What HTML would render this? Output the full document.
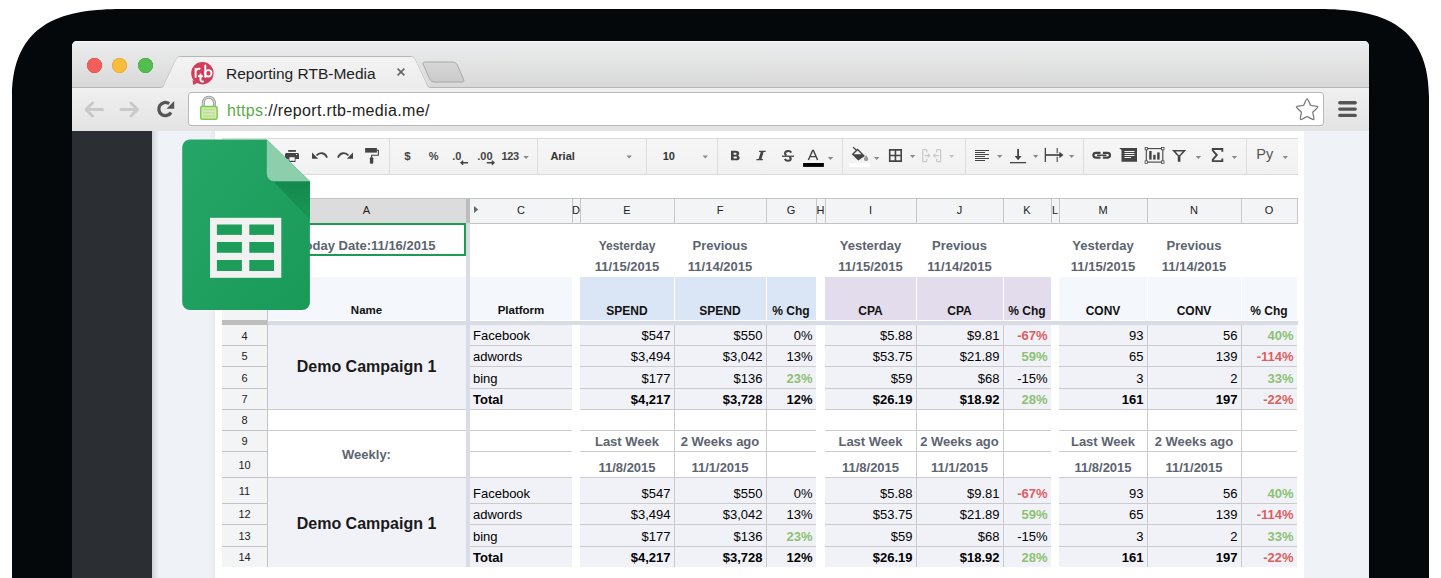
<!DOCTYPE html><html><head><meta charset="utf-8"><style>
*{margin:0;padding:0;box-sizing:border-box}
html,body{width:1441px;height:578px;overflow:hidden;background:#fff;font-family:"Liberation Sans",sans-serif}
.a{position:absolute}
#dev{position:absolute;left:12px;top:9px;width:1418px;height:700px;background:#05080a;border-radius:112px 84px 0 0/68px 68px 0 0}
#win{position:absolute;left:72px;top:41px;width:1297px;height:600px;background:#fff;border-radius:5px 5px 0 0;overflow:hidden}
#tabbar{position:absolute;left:0;top:0;width:1297px;height:46px;background:linear-gradient(#ecedee,#d8d8d8);box-shadow:inset 0 1px 0 #f6f6f6}
#toolbar{position:absolute;left:0;top:46px;width:1297px;height:45px;background:linear-gradient(#f0f0f0,#e3e3e3);border-top:1px solid #c4c4c4}
.t{position:absolute;white-space:nowrap}
.c{position:absolute;white-space:nowrap;overflow:visible;font-size:13px;color:#000;line-height:14px}
</style></head><body><svg class="a" style="left:0;top:0" width="1441" height="578"><path d="M12,578 L12,97 C12,3 94,9 143,9 L1298,9 C1347,9 1429,3 1429,97 L1429,578 Z" fill="#05080a"/></svg>
<div id="win">
<div id="tabbar"></div>
<div id="toolbar"></div>
</div>
<svg class="a" style="left:0;top:0" width="1441" height="140"><defs><linearGradient id="tg" x1="0" y1="0" x2="0" y2="1"><stop offset="0" stop-color="#f3f3f3"/><stop offset="1" stop-color="#ececec"/></linearGradient><linearGradient id="ng" x1="0" y1="0" x2="0" y2="1"><stop offset="0" stop-color="#d6d6d6"/><stop offset="1" stop-color="#cbcbcb"/></linearGradient><linearGradient id="tbg" x1="0" y1="0" x2="0" y2="1"><stop offset="0" stop-color="#ececec"/><stop offset="1" stop-color="#e3e3e3"/></linearGradient></defs><path d="M72,87.5 L160,87.5 C163,87.5 164,86 165,83 L176,59.5 C177,57.5 178.5,56.5 181,56.5 L410,56.5 C412.5,56.5 414,57.5 415,59.5 L426,83 C427,86 428,87.5 431,87.5 L1369,87.5" fill="none" stroke="#b6b6b6" stroke-width="1"/><path d="M160,88 C163,88 164,86 165,83 L176,59.5 C177,57.5 178.5,57 181,57 L410,57 C412.5,57 414,57.5 415,59.5 L426,83 C427,86 428,88 431,88 Z" fill="url(#tg)"/><path d="M426.5,62 L452,62 C455,62 456.5,63 457.5,65.5 L463.5,79 C464.5,81.5 463.5,82 461,82 L435,82 C432,82 430.5,81 429.5,78.5 L423.5,65 C422.5,62.5 423.5,62 426.5,62 Z" fill="url(#ng)" stroke="#a8a8a8" stroke-width="1"/></svg>
<div class="a" style="left:87.1px;top:57.9px;width:15px;height:15px;border-radius:50%;background:#f25f5a;box-shadow:inset 0 0 0 0.6px #e5463f"></div>
<div class="a" style="left:112.4px;top:57.9px;width:15px;height:15px;border-radius:50%;background:#fbbb3b;box-shadow:inset 0 0 0 0.6px #e2a128"></div>
<div class="a" style="left:137.6px;top:57.9px;width:15px;height:15px;border-radius:50%;background:#54bd4f;box-shadow:inset 0 0 0 0.6px #2fae35"></div>
<div class="a" style="left:226px;top:65.3px;font-size:15.5px;line-height:18px;color:#1e1e1e;white-space:nowrap">Reporting RTB-Media</div>
<div class="a" style="left:188px;top:92px;width:1136px;height:34px;background:#fff;border:1px solid #b9b9b9;border-radius:3px"></div>
<div class="a" style="left:227px;top:100.8px;font-size:16px;line-height:19px;letter-spacing:0.35px;color:#222;white-space:nowrap"><span style="color:#5aaa47">https</span><span style="color:#7b7b7b">:</span>//report.rtb-media.me/</div>
<svg class="a" style="left:0;top:0" width="1441" height="135"><g fill="none" stroke="#c9c9c9" stroke-width="3" stroke-linecap="round" stroke-linejoin="round"><path d="M86,109.5 H102.5 M92.5,103 L86,109.5 L92.5,116"/><path d="M121,109.5 H137.5 M131,103 L137.5,109.5 L131,116"/></g><path d="M169.2,103.6 A6.6,6.6 0 1 0 171,112.5" fill="none" stroke="#555" stroke-width="3.3"/><path d="M166.5,108.8 L174.2,108.8 L174.2,101 Z" fill="#555"/><path d="M203.3,106 V102.8 A5.6,5.6 0 0 1 214.5,102.8 V106" fill="none" stroke="#9a9a9a" stroke-width="3"/><path d="M203.3,106 V102.8 A5.6,5.6 0 0 1 214.5,102.8 V106" fill="none" stroke="#cfcfcf" stroke-width="1.4"/><rect x="200.7" y="106.6" width="16.4" height="12.6" rx="1.5" fill="#d3eaae" stroke="#80c857" stroke-width="1.5"/><path d="M203,109.5 H215 M203,112.8 H215 M203,116.1 H215" stroke="#b6dc8c" stroke-width="1"/><circle cx="202.4" cy="73.2" r="11.2" fill="#cf3f5a"/><path d="M192.5,80 L193.3,85 L198,82.5 Z" fill="#cf3f5a"/><g fill="none" stroke="#fff" stroke-width="1.9" stroke-linecap="round"><path d="M195.6,77 V68.8 M195.6,71.5 C196.3,69.2 198,68.5 199.6,68.8"/><path d="M200.5,74.5 V79.5 C200.5,81.2 201.5,81.8 203,81.5 M198.8,76.3 H202.2"/><path d="M205.3,65.5 V77"/><circle cx="208.3" cy="73.3" r="3.2"/></g><path d="M397.6,68.6 L404.4,75.4 M404.4,68.6 L397.6,75.4" stroke="#666" stroke-width="1.6"/><path d="M1307.1,98.8 C1308.2,98.8 1310,104.6 1310.6,105.3 C1311.3,105.9 1317.5,105.7 1317.8,106.8 C1318.2,107.9 1313.1,111.3 1312.8,112.2 C1312.5,113.2 1314.6,118.9 1313.7,119.6 C1312.8,120.3 1308.1,116.6 1307.1,116.6 C1306.1,116.6 1301.4,120.3 1300.5,119.6 C1299.6,118.9 1301.7,113.2 1301.4,112.2 C1301.1,111.3 1296,107.9 1296.4,106.8 C1296.7,105.7 1302.9,105.9 1303.6,105.3 C1304.2,104.6 1306,98.8 1307.1,98.8 Z" fill="#fff" stroke="#777" stroke-width="1.3" stroke-linejoin="round"/><g stroke="#555" stroke-width="3.4" stroke-linecap="round"><path d="M1339.8,102.8 H1355.2 M1339.8,109.1 H1355.2 M1339.8,115.4 H1355.2"/></g></svg>
<div class="a" style="left:72px;top:131px;width:80px;height:447px;background:#2b2f33"></div>
<div class="a" style="left:152px;top:131px;width:1217px;height:447px;background:#eff2f7"></div>
<div class="a" style="left:152px;top:131px;width:7px;height:447px;background:linear-gradient(90deg,rgba(0,0,0,0.13),rgba(0,0,0,0))"></div>
<div class="a" style="left:209px;top:131px;width:6px;height:447px;background:linear-gradient(90deg,rgba(0,0,0,0),rgba(0,0,0,0.035))"></div>
<div class="a" style="left:215px;top:131px;width:1089px;height:447px;background:#fff"></div>
<div class="a" style="left:222px;top:138px;width:1076px;height:37px;background:linear-gradient(#f6f6f6,#f1f1f1);border-top:1px solid #dadada;border-bottom:1px solid #dadada"></div>
<div class="a" style="left:222px;top:198px;width:1076px;height:25px;background:#f3f4f6;border-top:1px solid #c6c6c6;border-bottom:1px solid #c6c6c6"></div>
<div class="a" style="left:222px;top:223px;width:45px;height:344px;background:#f3f4f6;border-right:1px solid #c6c6c6"></div>
<div class="a" style="left:222px;top:198px;width:1076px;height:26px;background:#f3f4f6;border-top:1px solid #c4c4c4;border-bottom:1px solid #c4c4c4"></div>
<div class="a" style="left:267px;top:199px;width:199px;height:24px;background:#dcdcdc"></div>
<div class="a" style="left:466px;top:199px;width:1px;height:24px;background:#c8c8c8"></div>
<div class="a" style="left:267px;top:203px;width:199px;text-align:center;font-size:11px;line-height:14px;color:#222">A</div>
<div class="a" style="left:572px;top:199px;width:1px;height:24px;background:#c8c8c8"></div>
<div class="a" style="left:470px;top:203px;width:102px;text-align:center;font-size:11px;line-height:14px;color:#222">C</div>
<div class="a" style="left:580px;top:199px;width:1px;height:24px;background:#c8c8c8"></div>
<div class="a" style="left:572px;top:203px;width:8px;text-align:center;font-size:11px;line-height:14px;color:#222">D</div>
<div class="a" style="left:674px;top:199px;width:1px;height:24px;background:#c8c8c8"></div>
<div class="a" style="left:580px;top:203px;width:94px;text-align:center;font-size:11px;line-height:14px;color:#222">E</div>
<div class="a" style="left:766px;top:199px;width:1px;height:24px;background:#c8c8c8"></div>
<div class="a" style="left:674px;top:203px;width:92px;text-align:center;font-size:11px;line-height:14px;color:#222">F</div>
<div class="a" style="left:816px;top:199px;width:1px;height:24px;background:#c8c8c8"></div>
<div class="a" style="left:766px;top:203px;width:50px;text-align:center;font-size:11px;line-height:14px;color:#222">G</div>
<div class="a" style="left:825px;top:199px;width:1px;height:24px;background:#c8c8c8"></div>
<div class="a" style="left:816px;top:203px;width:9px;text-align:center;font-size:11px;line-height:14px;color:#222">H</div>
<div class="a" style="left:916px;top:199px;width:1px;height:24px;background:#c8c8c8"></div>
<div class="a" style="left:825px;top:203px;width:91px;text-align:center;font-size:11px;line-height:14px;color:#222">I</div>
<div class="a" style="left:1003px;top:199px;width:1px;height:24px;background:#c8c8c8"></div>
<div class="a" style="left:916px;top:203px;width:87px;text-align:center;font-size:11px;line-height:14px;color:#222">J</div>
<div class="a" style="left:1051px;top:199px;width:1px;height:24px;background:#c8c8c8"></div>
<div class="a" style="left:1003px;top:203px;width:48px;text-align:center;font-size:11px;line-height:14px;color:#222">K</div>
<div class="a" style="left:1059px;top:199px;width:1px;height:24px;background:#c8c8c8"></div>
<div class="a" style="left:1051px;top:203px;width:8px;text-align:center;font-size:11px;line-height:14px;color:#222">L</div>
<div class="a" style="left:1147px;top:199px;width:1px;height:24px;background:#c8c8c8"></div>
<div class="a" style="left:1059px;top:203px;width:88px;text-align:center;font-size:11px;line-height:14px;color:#222">M</div>
<div class="a" style="left:1241px;top:199px;width:1px;height:24px;background:#c8c8c8"></div>
<div class="a" style="left:1147px;top:203px;width:94px;text-align:center;font-size:11px;line-height:14px;color:#222">N</div>
<div class="a" style="left:1297px;top:199px;width:1px;height:24px;background:#c8c8c8"></div>
<div class="a" style="left:1241px;top:203px;width:56px;text-align:center;font-size:11px;line-height:14px;color:#222">O</div>
<div class="a" style="left:222px;top:199px;width:45px;height:24px;"></div>
<svg class="a" style="left:473px;top:205px" width="8" height="10"><path d="M1,1 L5.2,4.5 L1,8 Z" fill="#666"/></svg>
<div class="a" style="left:466px;top:199px;width:4px;height:24px;background:#bdbdbd"></div>
<div class="a" style="left:222px;top:223px;width:45px;height:344px;background:#f3f4f6"></div>
<div class="a" style="left:267px;top:223px;width:1px;height:344px;background:#c4c4c4"></div>
<div class="a" style="left:222px;top:320px;width:45px;height:5px;background:#bdbdbd"></div>
<div class="a" style="left:268px;top:321px;width:1030px;height:4px;background:#d8dce6"></div>
<div class="a" style="left:466px;top:223px;width:4px;height:344px;background:#d8dce6"></div>
<div class="a" style="left:222px;top:325.8px;width:45px;height:20px;text-align:center;font-size:11px;line-height:20px;color:#222">4</div>
<div class="a" style="left:222px;top:345px;width:45px;height:1px;background:#c4c4c4"></div>
<div class="a" style="left:222px;top:345.8px;width:45px;height:21px;text-align:center;font-size:11px;line-height:21px;color:#222">5</div>
<div class="a" style="left:222px;top:366px;width:45px;height:1px;background:#c4c4c4"></div>
<div class="a" style="left:222px;top:366.8px;width:45px;height:22px;text-align:center;font-size:11px;line-height:22px;color:#222">6</div>
<div class="a" style="left:222px;top:388px;width:45px;height:1px;background:#c4c4c4"></div>
<div class="a" style="left:222px;top:388.8px;width:45px;height:21px;text-align:center;font-size:11px;line-height:21px;color:#222">7</div>
<div class="a" style="left:222px;top:409px;width:45px;height:1px;background:#c4c4c4"></div>
<div class="a" style="left:222px;top:409.8px;width:45px;height:21px;text-align:center;font-size:11px;line-height:21px;color:#222">8</div>
<div class="a" style="left:222px;top:430px;width:45px;height:1px;background:#c4c4c4"></div>
<div class="a" style="left:222px;top:430.8px;width:45px;height:21px;text-align:center;font-size:11px;line-height:21px;color:#222">9</div>
<div class="a" style="left:222px;top:451px;width:45px;height:1px;background:#c4c4c4"></div>
<div class="a" style="left:222px;top:451.8px;width:45px;height:26px;text-align:center;font-size:11px;line-height:26px;color:#222">10</div>
<div class="a" style="left:222px;top:477px;width:45px;height:1px;background:#c4c4c4"></div>
<div class="a" style="left:222px;top:477.8px;width:45px;height:26px;text-align:center;font-size:11px;line-height:26px;color:#222">11</div>
<div class="a" style="left:222px;top:503px;width:45px;height:1px;background:#c4c4c4"></div>
<div class="a" style="left:222px;top:503.8px;width:45px;height:21px;text-align:center;font-size:11px;line-height:21px;color:#222">12</div>
<div class="a" style="left:222px;top:524px;width:45px;height:1px;background:#c4c4c4"></div>
<div class="a" style="left:222px;top:524.8px;width:45px;height:22px;text-align:center;font-size:11px;line-height:22px;color:#222">13</div>
<div class="a" style="left:222px;top:546px;width:45px;height:1px;background:#c4c4c4"></div>
<div class="a" style="left:222px;top:546.8px;width:45px;height:21px;text-align:center;font-size:11px;line-height:21px;color:#222">14</div>
<div class="a" style="left:268px;top:277px;width:198px;height:43px;background:#f4f7fb"></div>
<div class="a" style="left:470px;top:277px;width:102px;height:43px;background:#f4f7fb"></div>
<div class="a" style="left:580px;top:277px;width:94px;height:43px;background:#dae6f6"></div>
<div class="a" style="left:675px;top:277px;width:91px;height:43px;background:#dae6f6"></div>
<div class="a" style="left:767px;top:277px;width:49px;height:43px;background:#dae6f6"></div>
<div class="a" style="left:825px;top:277px;width:91px;height:43px;background:#e2dcec"></div>
<div class="a" style="left:917px;top:277px;width:86px;height:43px;background:#e2dcec"></div>
<div class="a" style="left:1004px;top:277px;width:47px;height:43px;background:#e2dcec"></div>
<div class="a" style="left:1059px;top:277px;width:88px;height:43px;background:#f4f7fb"></div>
<div class="a" style="left:1148px;top:277px;width:93px;height:43px;background:#f4f7fb"></div>
<div class="a" style="left:1242px;top:277px;width:55px;height:43px;background:#f4f7fb"></div>
<div class="a" style="left:268px;top:325px;width:198px;height:84px;background:#f1f2f8"></div>
<div class="a" style="left:470px;top:325px;width:102px;height:84px;background:#f1f2f8"></div>
<div class="a" style="left:580px;top:325px;width:236px;height:84px;background:#f1f2f8"></div>
<div class="a" style="left:825px;top:325px;width:226px;height:84px;background:#f1f2f8"></div>
<div class="a" style="left:1059px;top:325px;width:238px;height:84px;background:#f1f2f8"></div>
<div class="a" style="left:268px;top:477px;width:198px;height:90px;background:#f1f2f8"></div>
<div class="a" style="left:470px;top:477px;width:102px;height:90px;background:#f1f2f8"></div>
<div class="a" style="left:580px;top:477px;width:236px;height:90px;background:#f1f2f8"></div>
<div class="a" style="left:825px;top:477px;width:226px;height:90px;background:#f1f2f8"></div>
<div class="a" style="left:1059px;top:477px;width:238px;height:90px;background:#f1f2f8"></div>
<div class="a" style="left:470px;top:345px;width:102px;height:1px;background:#cbcbcb"></div>
<div class="a" style="left:580px;top:345px;width:236px;height:1px;background:#cbcbcb"></div>
<div class="a" style="left:825px;top:345px;width:226px;height:1px;background:#cbcbcb"></div>
<div class="a" style="left:1059px;top:345px;width:238px;height:1px;background:#cbcbcb"></div>
<div class="a" style="left:470px;top:366px;width:102px;height:1px;background:#cbcbcb"></div>
<div class="a" style="left:580px;top:366px;width:236px;height:1px;background:#cbcbcb"></div>
<div class="a" style="left:825px;top:366px;width:226px;height:1px;background:#cbcbcb"></div>
<div class="a" style="left:1059px;top:366px;width:238px;height:1px;background:#cbcbcb"></div>
<div class="a" style="left:470px;top:388px;width:102px;height:1px;background:#cbcbcb"></div>
<div class="a" style="left:580px;top:388px;width:236px;height:1px;background:#cbcbcb"></div>
<div class="a" style="left:825px;top:388px;width:226px;height:1px;background:#cbcbcb"></div>
<div class="a" style="left:1059px;top:388px;width:238px;height:1px;background:#cbcbcb"></div>
<div class="a" style="left:268px;top:409px;width:198px;height:1px;background:#cbcbcb"></div>
<div class="a" style="left:470px;top:409px;width:102px;height:1px;background:#cbcbcb"></div>
<div class="a" style="left:580px;top:409px;width:236px;height:1px;background:#cbcbcb"></div>
<div class="a" style="left:825px;top:409px;width:226px;height:1px;background:#cbcbcb"></div>
<div class="a" style="left:1059px;top:409px;width:238px;height:1px;background:#cbcbcb"></div>
<div class="a" style="left:268px;top:430px;width:198px;height:1px;background:#cbcbcb"></div>
<div class="a" style="left:470px;top:430px;width:102px;height:1px;background:#cbcbcb"></div>
<div class="a" style="left:580px;top:430px;width:236px;height:1px;background:#cbcbcb"></div>
<div class="a" style="left:825px;top:430px;width:226px;height:1px;background:#cbcbcb"></div>
<div class="a" style="left:1059px;top:430px;width:238px;height:1px;background:#cbcbcb"></div>
<div class="a" style="left:470px;top:451px;width:102px;height:1px;background:#cbcbcb"></div>
<div class="a" style="left:580px;top:451px;width:236px;height:1px;background:#cbcbcb"></div>
<div class="a" style="left:825px;top:451px;width:226px;height:1px;background:#cbcbcb"></div>
<div class="a" style="left:1059px;top:451px;width:238px;height:1px;background:#cbcbcb"></div>
<div class="a" style="left:268px;top:477px;width:198px;height:1px;background:#cbcbcb"></div>
<div class="a" style="left:470px;top:477px;width:102px;height:1px;background:#cbcbcb"></div>
<div class="a" style="left:580px;top:477px;width:236px;height:1px;background:#cbcbcb"></div>
<div class="a" style="left:825px;top:477px;width:226px;height:1px;background:#cbcbcb"></div>
<div class="a" style="left:1059px;top:477px;width:238px;height:1px;background:#cbcbcb"></div>
<div class="a" style="left:470px;top:503px;width:102px;height:1px;background:#cbcbcb"></div>
<div class="a" style="left:580px;top:503px;width:236px;height:1px;background:#cbcbcb"></div>
<div class="a" style="left:825px;top:503px;width:226px;height:1px;background:#cbcbcb"></div>
<div class="a" style="left:1059px;top:503px;width:238px;height:1px;background:#cbcbcb"></div>
<div class="a" style="left:470px;top:524px;width:102px;height:1px;background:#cbcbcb"></div>
<div class="a" style="left:580px;top:524px;width:236px;height:1px;background:#cbcbcb"></div>
<div class="a" style="left:825px;top:524px;width:226px;height:1px;background:#cbcbcb"></div>
<div class="a" style="left:1059px;top:524px;width:238px;height:1px;background:#cbcbcb"></div>
<div class="a" style="left:470px;top:546px;width:102px;height:1px;background:#cbcbcb"></div>
<div class="a" style="left:580px;top:546px;width:236px;height:1px;background:#cbcbcb"></div>
<div class="a" style="left:825px;top:546px;width:226px;height:1px;background:#cbcbcb"></div>
<div class="a" style="left:1059px;top:546px;width:238px;height:1px;background:#cbcbcb"></div>
<div class="a" style="left:674px;top:325px;width:1px;height:242px;background:#cbcbcb"></div>
<div class="a" style="left:766px;top:325px;width:1px;height:242px;background:#cbcbcb"></div>
<div class="a" style="left:916px;top:325px;width:1px;height:242px;background:#cbcbcb"></div>
<div class="a" style="left:1003px;top:325px;width:1px;height:242px;background:#cbcbcb"></div>
<div class="a" style="left:1147px;top:325px;width:1px;height:242px;background:#cbcbcb"></div>
<div class="a" style="left:1241px;top:325px;width:1px;height:242px;background:#cbcbcb"></div>
<div class="a" style="left:267px;top:223px;width:199px;height:33px;border:2px solid #1f9a55;background:transparent"></div>
<div class="t" style="left:267px;top:239.00px;width:199px;font-size:13px;line-height:13px;color:#5c6470;text-align:center;font-weight:bold;">Today Date:11/16/2015</div>
<div class="t" style="left:580px;top:239.74px;width:94px;font-size:12px;line-height:12px;color:#5c6470;text-align:center;font-weight:bold;">Yesterday</div>
<div class="t" style="left:674px;top:238.90px;width:92px;font-size:13px;line-height:13px;color:#5c6470;text-align:center;font-weight:bold;">Previous</div>
<div class="t" style="left:580px;top:259.60px;width:94px;font-size:13px;line-height:13px;color:#5c6470;text-align:center;font-weight:bold;">11/15/2015</div>
<div class="t" style="left:674px;top:259.60px;width:92px;font-size:13px;line-height:13px;color:#5c6470;text-align:center;font-weight:bold;">11/14/2015</div>
<div class="t" style="left:580px;top:434.80px;width:94px;font-size:13px;line-height:13px;color:#5c6470;text-align:center;font-weight:bold;">Last Week</div>
<div class="t" style="left:674px;top:434.80px;width:92px;font-size:13px;line-height:13px;color:#5c6470;text-align:center;font-weight:bold;">2 Weeks ago</div>
<div class="t" style="left:580px;top:460.90px;width:94px;font-size:13px;line-height:13px;color:#5c6470;text-align:center;font-weight:bold;">11/8/2015</div>
<div class="t" style="left:674px;top:460.90px;width:92px;font-size:13px;line-height:13px;color:#5c6470;text-align:center;font-weight:bold;">11/1/2015</div>
<div class="t" style="left:825px;top:238.90px;width:91px;font-size:13px;line-height:13px;color:#5c6470;text-align:center;font-weight:bold;">Yesterday</div>
<div class="t" style="left:916px;top:238.90px;width:87px;font-size:13px;line-height:13px;color:#5c6470;text-align:center;font-weight:bold;">Previous</div>
<div class="t" style="left:825px;top:259.60px;width:91px;font-size:13px;line-height:13px;color:#5c6470;text-align:center;font-weight:bold;">11/15/2015</div>
<div class="t" style="left:916px;top:259.60px;width:87px;font-size:13px;line-height:13px;color:#5c6470;text-align:center;font-weight:bold;">11/14/2015</div>
<div class="t" style="left:825px;top:434.80px;width:91px;font-size:13px;line-height:13px;color:#5c6470;text-align:center;font-weight:bold;">Last Week</div>
<div class="t" style="left:916px;top:434.80px;width:87px;font-size:13px;line-height:13px;color:#5c6470;text-align:center;font-weight:bold;">2 Weeks ago</div>
<div class="t" style="left:825px;top:460.90px;width:91px;font-size:13px;line-height:13px;color:#5c6470;text-align:center;font-weight:bold;">11/8/2015</div>
<div class="t" style="left:916px;top:460.90px;width:87px;font-size:13px;line-height:13px;color:#5c6470;text-align:center;font-weight:bold;">11/1/2015</div>
<div class="t" style="left:1059px;top:238.90px;width:88px;font-size:13px;line-height:13px;color:#5c6470;text-align:center;font-weight:bold;">Yesterday</div>
<div class="t" style="left:1147px;top:238.90px;width:94px;font-size:13px;line-height:13px;color:#5c6470;text-align:center;font-weight:bold;">Previous</div>
<div class="t" style="left:1059px;top:259.60px;width:88px;font-size:13px;line-height:13px;color:#5c6470;text-align:center;font-weight:bold;">11/15/2015</div>
<div class="t" style="left:1147px;top:259.60px;width:94px;font-size:13px;line-height:13px;color:#5c6470;text-align:center;font-weight:bold;">11/14/2015</div>
<div class="t" style="left:1059px;top:434.80px;width:88px;font-size:13px;line-height:13px;color:#5c6470;text-align:center;font-weight:bold;">Last Week</div>
<div class="t" style="left:1147px;top:434.80px;width:94px;font-size:13px;line-height:13px;color:#5c6470;text-align:center;font-weight:bold;">2 Weeks ago</div>
<div class="t" style="left:1059px;top:460.90px;width:88px;font-size:13px;line-height:13px;color:#5c6470;text-align:center;font-weight:bold;">11/8/2015</div>
<div class="t" style="left:1147px;top:460.90px;width:94px;font-size:13px;line-height:13px;color:#5c6470;text-align:center;font-weight:bold;">11/1/2015</div>
<div class="t" style="left:267px;top:305.07px;width:199px;font-size:11.5px;line-height:11.5px;color:#111;text-align:center;font-weight:bold;">Name</div>
<div class="t" style="left:470px;top:305.07px;width:102px;font-size:11.5px;line-height:11.5px;color:#111;text-align:center;font-weight:bold;">Platform</div>
<div class="t" style="left:580px;top:304.64px;width:94px;font-size:12px;line-height:12px;color:#111;text-align:center;font-weight:bold;">SPEND</div>
<div class="t" style="left:674px;top:304.64px;width:92px;font-size:12px;line-height:12px;color:#111;text-align:center;font-weight:bold;">SPEND</div>
<div class="t" style="left:766px;top:304.64px;width:50px;font-size:12px;line-height:12px;color:#111;text-align:center;font-weight:bold;">% Chg</div>
<div class="t" style="left:825px;top:304.64px;width:91px;font-size:12px;line-height:12px;color:#111;text-align:center;font-weight:bold;">CPA</div>
<div class="t" style="left:916px;top:304.64px;width:87px;font-size:12px;line-height:12px;color:#111;text-align:center;font-weight:bold;">CPA</div>
<div class="t" style="left:1003px;top:304.64px;width:48px;font-size:12px;line-height:12px;color:#111;text-align:center;font-weight:bold;">% Chg</div>
<div class="t" style="left:1059px;top:304.64px;width:88px;font-size:12px;line-height:12px;color:#111;text-align:center;font-weight:bold;">CONV</div>
<div class="t" style="left:1147px;top:304.64px;width:94px;font-size:12px;line-height:12px;color:#111;text-align:center;font-weight:bold;">CONV</div>
<div class="t" style="left:1241px;top:304.64px;width:56px;font-size:12px;line-height:12px;color:#111;text-align:center;font-weight:bold;">% Chg</div>
<div class="t" style="left:267px;top:359.46px;width:199px;font-size:16px;line-height:16px;color:#1a1a1a;text-align:center;font-weight:bold;">Demo Campaign 1</div>
<div class="t" style="left:267px;top:515.66px;width:199px;font-size:16px;line-height:16px;color:#1a1a1a;text-align:center;font-weight:bold;">Demo Campaign 1</div>
<div class="t" style="left:267px;top:447.70px;width:199px;font-size:13px;line-height:13px;color:#5c6470;text-align:center;font-weight:bold;">Weekly:</div>
<div class="t" style="left:470px;top:329.10px;width:102px;font-size:13px;line-height:13px;color:#000;text-align:left;padding-left:3px;">Facebook</div>
<div class="t" style="left:580px;top:329.10px;width:94px;font-size:13px;line-height:13px;color:#000;text-align:right;padding-right:3.5px;">$547</div>
<div class="t" style="left:674px;top:329.10px;width:92px;font-size:13px;line-height:13px;color:#000;text-align:right;padding-right:3.5px;">$550</div>
<div class="t" style="left:766px;top:329.10px;width:50px;font-size:13px;line-height:13px;color:#000;text-align:right;padding-right:3.5px;">0%</div>
<div class="t" style="left:825px;top:329.10px;width:91px;font-size:13px;line-height:13px;color:#000;text-align:right;padding-right:3.5px;">$5.88</div>
<div class="t" style="left:916px;top:329.10px;width:87px;font-size:13px;line-height:13px;color:#000;text-align:right;padding-right:3.5px;">$9.81</div>
<div class="t" style="left:1003px;top:329.10px;width:48px;font-size:13px;line-height:13px;color:#dd5e5e;text-align:right;font-weight:bold;padding-right:3.5px;">-67%</div>
<div class="t" style="left:1059px;top:329.10px;width:88px;font-size:13px;line-height:13px;color:#000;text-align:right;padding-right:3.5px;">93</div>
<div class="t" style="left:1147px;top:329.10px;width:94px;font-size:13px;line-height:13px;color:#000;text-align:right;padding-right:3.5px;">56</div>
<div class="t" style="left:1241px;top:329.10px;width:56px;font-size:13px;line-height:13px;color:#8cc173;text-align:right;font-weight:bold;padding-right:3.5px;">40%</div>
<div class="t" style="left:470px;top:350.10px;width:102px;font-size:13px;line-height:13px;color:#000;text-align:left;padding-left:3px;">adwords</div>
<div class="t" style="left:580px;top:350.10px;width:94px;font-size:13px;line-height:13px;color:#000;text-align:right;padding-right:3.5px;">$3,494</div>
<div class="t" style="left:674px;top:350.10px;width:92px;font-size:13px;line-height:13px;color:#000;text-align:right;padding-right:3.5px;">$3,042</div>
<div class="t" style="left:766px;top:350.10px;width:50px;font-size:13px;line-height:13px;color:#000;text-align:right;padding-right:3.5px;">13%</div>
<div class="t" style="left:825px;top:350.10px;width:91px;font-size:13px;line-height:13px;color:#000;text-align:right;padding-right:3.5px;">$53.75</div>
<div class="t" style="left:916px;top:350.10px;width:87px;font-size:13px;line-height:13px;color:#000;text-align:right;padding-right:3.5px;">$21.89</div>
<div class="t" style="left:1003px;top:350.10px;width:48px;font-size:13px;line-height:13px;color:#8cc173;text-align:right;font-weight:bold;padding-right:3.5px;">59%</div>
<div class="t" style="left:1059px;top:350.10px;width:88px;font-size:13px;line-height:13px;color:#000;text-align:right;padding-right:3.5px;">65</div>
<div class="t" style="left:1147px;top:350.10px;width:94px;font-size:13px;line-height:13px;color:#000;text-align:right;padding-right:3.5px;">139</div>
<div class="t" style="left:1241px;top:350.10px;width:56px;font-size:13px;line-height:13px;color:#dd5e5e;text-align:right;font-weight:bold;padding-right:3.5px;">-114%</div>
<div class="t" style="left:470px;top:372.10px;width:102px;font-size:13px;line-height:13px;color:#000;text-align:left;padding-left:3px;">bing</div>
<div class="t" style="left:580px;top:372.10px;width:94px;font-size:13px;line-height:13px;color:#000;text-align:right;padding-right:3.5px;">$177</div>
<div class="t" style="left:674px;top:372.10px;width:92px;font-size:13px;line-height:13px;color:#000;text-align:right;padding-right:3.5px;">$136</div>
<div class="t" style="left:766px;top:372.10px;width:50px;font-size:13px;line-height:13px;color:#8cc173;text-align:right;font-weight:bold;padding-right:3.5px;">23%</div>
<div class="t" style="left:825px;top:372.10px;width:91px;font-size:13px;line-height:13px;color:#000;text-align:right;padding-right:3.5px;">$59</div>
<div class="t" style="left:916px;top:372.10px;width:87px;font-size:13px;line-height:13px;color:#000;text-align:right;padding-right:3.5px;">$68</div>
<div class="t" style="left:1003px;top:372.10px;width:48px;font-size:13px;line-height:13px;color:#000;text-align:right;padding-right:3.5px;">-15%</div>
<div class="t" style="left:1059px;top:372.10px;width:88px;font-size:13px;line-height:13px;color:#000;text-align:right;padding-right:3.5px;">3</div>
<div class="t" style="left:1147px;top:372.10px;width:94px;font-size:13px;line-height:13px;color:#000;text-align:right;padding-right:3.5px;">2</div>
<div class="t" style="left:1241px;top:372.10px;width:56px;font-size:13px;line-height:13px;color:#8cc173;text-align:right;font-weight:bold;padding-right:3.5px;">33%</div>
<div class="t" style="left:470px;top:393.10px;width:102px;font-size:13px;line-height:13px;color:#000;text-align:left;font-weight:bold;padding-left:3px;">Total</div>
<div class="t" style="left:580px;top:393.10px;width:94px;font-size:13px;line-height:13px;color:#000;text-align:right;font-weight:bold;padding-right:3.5px;">$4,217</div>
<div class="t" style="left:674px;top:393.10px;width:92px;font-size:13px;line-height:13px;color:#000;text-align:right;font-weight:bold;padding-right:3.5px;">$3,728</div>
<div class="t" style="left:766px;top:393.10px;width:50px;font-size:13px;line-height:13px;color:#000;text-align:right;font-weight:bold;padding-right:3.5px;">12%</div>
<div class="t" style="left:825px;top:393.10px;width:91px;font-size:13px;line-height:13px;color:#000;text-align:right;font-weight:bold;padding-right:3.5px;">$26.19</div>
<div class="t" style="left:916px;top:393.10px;width:87px;font-size:13px;line-height:13px;color:#000;text-align:right;font-weight:bold;padding-right:3.5px;">$18.92</div>
<div class="t" style="left:1003px;top:393.10px;width:48px;font-size:13px;line-height:13px;color:#8cc173;text-align:right;font-weight:bold;padding-right:3.5px;">28%</div>
<div class="t" style="left:1059px;top:393.10px;width:88px;font-size:13px;line-height:13px;color:#000;text-align:right;font-weight:bold;padding-right:3.5px;">161</div>
<div class="t" style="left:1147px;top:393.10px;width:94px;font-size:13px;line-height:13px;color:#000;text-align:right;font-weight:bold;padding-right:3.5px;">197</div>
<div class="t" style="left:1241px;top:393.10px;width:56px;font-size:13px;line-height:13px;color:#dd5e5e;text-align:right;font-weight:bold;padding-right:3.5px;">-22%</div>
<div class="t" style="left:470px;top:487.10px;width:102px;font-size:13px;line-height:13px;color:#000;text-align:left;padding-left:3px;">Facebook</div>
<div class="t" style="left:580px;top:487.10px;width:94px;font-size:13px;line-height:13px;color:#000;text-align:right;padding-right:3.5px;">$547</div>
<div class="t" style="left:674px;top:487.10px;width:92px;font-size:13px;line-height:13px;color:#000;text-align:right;padding-right:3.5px;">$550</div>
<div class="t" style="left:766px;top:487.10px;width:50px;font-size:13px;line-height:13px;color:#000;text-align:right;padding-right:3.5px;">0%</div>
<div class="t" style="left:825px;top:487.10px;width:91px;font-size:13px;line-height:13px;color:#000;text-align:right;padding-right:3.5px;">$5.88</div>
<div class="t" style="left:916px;top:487.10px;width:87px;font-size:13px;line-height:13px;color:#000;text-align:right;padding-right:3.5px;">$9.81</div>
<div class="t" style="left:1003px;top:487.10px;width:48px;font-size:13px;line-height:13px;color:#dd5e5e;text-align:right;font-weight:bold;padding-right:3.5px;">-67%</div>
<div class="t" style="left:1059px;top:487.10px;width:88px;font-size:13px;line-height:13px;color:#000;text-align:right;padding-right:3.5px;">93</div>
<div class="t" style="left:1147px;top:487.10px;width:94px;font-size:13px;line-height:13px;color:#000;text-align:right;padding-right:3.5px;">56</div>
<div class="t" style="left:1241px;top:487.10px;width:56px;font-size:13px;line-height:13px;color:#8cc173;text-align:right;font-weight:bold;padding-right:3.5px;">40%</div>
<div class="t" style="left:470px;top:508.10px;width:102px;font-size:13px;line-height:13px;color:#000;text-align:left;padding-left:3px;">adwords</div>
<div class="t" style="left:580px;top:508.10px;width:94px;font-size:13px;line-height:13px;color:#000;text-align:right;padding-right:3.5px;">$3,494</div>
<div class="t" style="left:674px;top:508.10px;width:92px;font-size:13px;line-height:13px;color:#000;text-align:right;padding-right:3.5px;">$3,042</div>
<div class="t" style="left:766px;top:508.10px;width:50px;font-size:13px;line-height:13px;color:#000;text-align:right;padding-right:3.5px;">13%</div>
<div class="t" style="left:825px;top:508.10px;width:91px;font-size:13px;line-height:13px;color:#000;text-align:right;padding-right:3.5px;">$53.75</div>
<div class="t" style="left:916px;top:508.10px;width:87px;font-size:13px;line-height:13px;color:#000;text-align:right;padding-right:3.5px;">$21.89</div>
<div class="t" style="left:1003px;top:508.10px;width:48px;font-size:13px;line-height:13px;color:#8cc173;text-align:right;font-weight:bold;padding-right:3.5px;">59%</div>
<div class="t" style="left:1059px;top:508.10px;width:88px;font-size:13px;line-height:13px;color:#000;text-align:right;padding-right:3.5px;">65</div>
<div class="t" style="left:1147px;top:508.10px;width:94px;font-size:13px;line-height:13px;color:#000;text-align:right;padding-right:3.5px;">139</div>
<div class="t" style="left:1241px;top:508.10px;width:56px;font-size:13px;line-height:13px;color:#dd5e5e;text-align:right;font-weight:bold;padding-right:3.5px;">-114%</div>
<div class="t" style="left:470px;top:530.10px;width:102px;font-size:13px;line-height:13px;color:#000;text-align:left;padding-left:3px;">bing</div>
<div class="t" style="left:580px;top:530.10px;width:94px;font-size:13px;line-height:13px;color:#000;text-align:right;padding-right:3.5px;">$177</div>
<div class="t" style="left:674px;top:530.10px;width:92px;font-size:13px;line-height:13px;color:#000;text-align:right;padding-right:3.5px;">$136</div>
<div class="t" style="left:766px;top:530.10px;width:50px;font-size:13px;line-height:13px;color:#8cc173;text-align:right;font-weight:bold;padding-right:3.5px;">23%</div>
<div class="t" style="left:825px;top:530.10px;width:91px;font-size:13px;line-height:13px;color:#000;text-align:right;padding-right:3.5px;">$59</div>
<div class="t" style="left:916px;top:530.10px;width:87px;font-size:13px;line-height:13px;color:#000;text-align:right;padding-right:3.5px;">$68</div>
<div class="t" style="left:1003px;top:530.10px;width:48px;font-size:13px;line-height:13px;color:#000;text-align:right;padding-right:3.5px;">-15%</div>
<div class="t" style="left:1059px;top:530.10px;width:88px;font-size:13px;line-height:13px;color:#000;text-align:right;padding-right:3.5px;">3</div>
<div class="t" style="left:1147px;top:530.10px;width:94px;font-size:13px;line-height:13px;color:#000;text-align:right;padding-right:3.5px;">2</div>
<div class="t" style="left:1241px;top:530.10px;width:56px;font-size:13px;line-height:13px;color:#8cc173;text-align:right;font-weight:bold;padding-right:3.5px;">33%</div>
<div class="t" style="left:470px;top:551.10px;width:102px;font-size:13px;line-height:13px;color:#000;text-align:left;font-weight:bold;padding-left:3px;">Total</div>
<div class="t" style="left:580px;top:551.10px;width:94px;font-size:13px;line-height:13px;color:#000;text-align:right;font-weight:bold;padding-right:3.5px;">$4,217</div>
<div class="t" style="left:674px;top:551.10px;width:92px;font-size:13px;line-height:13px;color:#000;text-align:right;font-weight:bold;padding-right:3.5px;">$3,728</div>
<div class="t" style="left:766px;top:551.10px;width:50px;font-size:13px;line-height:13px;color:#000;text-align:right;font-weight:bold;padding-right:3.5px;">12%</div>
<div class="t" style="left:825px;top:551.10px;width:91px;font-size:13px;line-height:13px;color:#000;text-align:right;font-weight:bold;padding-right:3.5px;">$26.19</div>
<div class="t" style="left:916px;top:551.10px;width:87px;font-size:13px;line-height:13px;color:#000;text-align:right;font-weight:bold;padding-right:3.5px;">$18.92</div>
<div class="t" style="left:1003px;top:551.10px;width:48px;font-size:13px;line-height:13px;color:#8cc173;text-align:right;font-weight:bold;padding-right:3.5px;">28%</div>
<div class="t" style="left:1059px;top:551.10px;width:88px;font-size:13px;line-height:13px;color:#000;text-align:right;font-weight:bold;padding-right:3.5px;">161</div>
<div class="t" style="left:1147px;top:551.10px;width:94px;font-size:13px;line-height:13px;color:#000;text-align:right;font-weight:bold;padding-right:3.5px;">197</div>
<div class="t" style="left:1241px;top:551.10px;width:56px;font-size:13px;line-height:13px;color:#dd5e5e;text-align:right;font-weight:bold;padding-right:3.5px;">-22%</div>
<svg class="a" style="left:0;top:0;font-family:Liberation Sans" width="1441" height="200"><rect x="389" y="139" width="1" height="35" fill="#dcdcdc"/><rect x="537" y="139" width="1" height="35" fill="#dcdcdc"/><rect x="646" y="139" width="1" height="35" fill="#dcdcdc"/><rect x="717" y="139" width="1" height="35" fill="#dcdcdc"/><rect x="842" y="139" width="1" height="35" fill="#dcdcdc"/><rect x="965" y="139" width="1" height="35" fill="#dcdcdc"/><rect x="1083" y="139" width="1" height="35" fill="#dcdcdc"/><rect x="1246" y="139" width="1" height="35" fill="#dcdcdc"/><rect x="288.2" y="150" width="7.7" height="1.8" fill="#444"/><path d="M286.5,153 H297.5 C298.3,153 299,153.6 299,154.5 V159 H295.5 V162 H288.5 V159 H285 V154.5 C285,153.6 285.7,153 286.5,153 Z" fill="#444"/><rect x="289.4" y="157.2" width="5.3" height="3.6" fill="#f3f3f3"/><circle cx="296.6" cy="154.6" r="0.7" fill="#f3f3f3"/><path d="M316.5,155.5 C319.5,152 325,152.2 327,157.6" fill="none" stroke="#444" stroke-width="1.9"/><path d="M312,152.6 L312,158.7 L318.2,158.7 Z" fill="#444"/><path d="M348.5,155.5 C345.5,152 340,152.2 338,157.6" fill="none" stroke="#444" stroke-width="1.9"/><path d="M353,152.6 L353,158.7 L346.8,158.7 Z" fill="#444"/><rect x="365.1" y="148" width="11.8" height="4.6" fill="#444"/><path d="M376.5,150.3 H378.4 V155.3 H371.6 V157.5" fill="none" stroke="#444" stroke-width="1.1"/><rect x="369.9" y="157.2" width="3.4" height="6.6" rx="1" fill="#444"/><text x="407.5" y="160.3" font-size="11.5" font-weight="bold" fill="#444" text-anchor="middle">$</text><text x="433.6" y="160.2" font-size="11" font-weight="bold" fill="#444" text-anchor="middle">%</text><text x="452.3" y="160" font-size="11" font-weight="bold" fill="#444">.0</text><path d="M468,162.8 H461 M463.2,160.8 L461,162.8 L463.2,164.8" fill="none" stroke="#444" stroke-width="1.4"/><text x="477.3" y="160" font-size="11" font-weight="bold" fill="#444">.00</text><path d="M486.8,162.8 H494 M491.8,160.8 L494,162.8 L491.8,164.8" fill="none" stroke="#444" stroke-width="1.4"/><text x="501.5" y="160" font-size="11" font-weight="bold" fill="#444" textLength="17.5">123</text><path d="M523.3,156 L528.7,156 L526,159 Z" fill="#8a8a8a"/><text x="550.4" y="160.2" font-size="11" font-weight="bold" fill="#333">Arial</text><path d="M626.5,155.5 L631.9000000000001,155.5 L629.2,158.5 Z" fill="#8a8a8a"/><text x="662.7" y="160.2" font-size="11" font-weight="bold" fill="#333">10</text><path d="M702.5999999999999,155.5 L708.0,155.5 L705.3,158.5 Z" fill="#8a8a8a"/><path d="M731,150.8 H735.6 C738.2,150.8 739.2,152 739.2,153.4 C739.2,154.6 738.5,155.2 737.6,155.5 C738.8,155.8 739.6,156.7 739.6,157.9 C739.6,159.4 738.5,160.3 736,160.3 H731 Z M733.6,152.7 V154.7 H735.2 C736.2,154.7 736.6,154.3 736.6,153.7 C736.6,153.1 736.2,152.7 735.2,152.7 Z M733.6,156.4 V158.4 H735.6 C736.6,158.4 737,158 737,157.4 C737,156.8 736.6,156.4 735.6,156.4 Z" fill="#444" fill-rule="evenodd"/><path d="M759.3,150.8 H765.8 L765.5,152.1 H763.6 L761.5,159 H763 L762.7,160.3 H756.2 L756.5,159 H758.6 L760.7,152.1 H759 Z" fill="#444"/><path d="M791.2,152.6 C790.8,151.5 789.6,150.9 788.2,150.9 C786.3,150.9 785,152 785,153.4 C785,154.4 785.6,155 786.6,155.4 M789.3,157 C790.3,157.4 790.8,158 790.8,158.8 C790.8,160 789.6,160.7 788,160.7 C786.5,160.7 785.3,160 784.8,158.8" fill="none" stroke="#444" stroke-width="2"/><rect x="782" y="155.6" width="12" height="1.3" fill="#444"/><path d="M808.4,160 L812.6,150.4 H813.4 L817.6,160 M810,156.6 H816" fill="none" stroke="#444" stroke-width="1.45"/><rect x="803.1" y="163" width="20.8" height="3.9" fill="#000"/><path d="M827.8,157 L833.2,157 L830.5,160 Z" fill="#8a8a8a"/><path d="M853.1,147.2 L858.9,152.4" stroke="#444" stroke-width="1.3"/><path d="M851.7,154.3 L857.6,148.5 L865,155.9 L858.3,160.6 Z" fill="#444"/><path d="M853.6,154.3 L857.6,150.4 L861.5,154.3 Z" fill="#f3f3f3"/><path d="M866.1,155.2 C867.3,157 868.3,158.2 868.3,159.2 C868.3,160.4 867.3,161 866.1,161 C864.9,161 863.9,160.4 863.9,159.2 C863.9,158.2 864.9,157 866.1,155.2 Z" fill="#9a9a9a"/><rect x="848.9" y="163.1" width="21.1" height="3.8" fill="#fff"/><path d="M874.0,157 L879.4000000000001,157 L876.7,160 Z" fill="#8a8a8a"/><path d="M889.7,149.9 H901.2 V161.1 H889.7 Z M895.45,149.9 V161.1 M889.7,155.5 H901.2" fill="none" stroke="#444" stroke-width="1.6"/><path d="M909.9,155 L915.3000000000001,155 L912.6,158 Z" fill="#8a8a8a"/><path d="M922.7,149.7 H926.7 M922.7,161.6 H926.7 M922.7,149.7 V161.6 M926.7,149.7 V152.5 M926.7,158.8 V161.6 M940.6,149.7 H936.6 M940.6,161.6 H936.6 M940.6,149.7 V161.6 M936.6,149.7 V152.5 M936.6,158.8 V161.6" fill="none" stroke="#cacaca" stroke-width="1.3"/><path d="M924.5,155.6 H929.8 M927.8,153.6 L929.8,155.6 L927.8,157.6 M938.8,155.6 H933.5 M935.5,153.6 L933.5,155.6 L935.5,157.6" fill="none" stroke="#cacaca" stroke-width="1.3"/><path d="M948.9,155 L954.3000000000001,155 L951.6,158 Z" fill="#c4c4c4"/><rect x="975" y="150" width="14" height="1" fill="#444"/><rect x="975" y="152" width="10" height="1" fill="#444"/><rect x="975" y="154" width="14" height="1" fill="#444"/><rect x="975" y="156" width="10" height="1" fill="#444"/><rect x="975" y="158" width="14" height="1" fill="#444"/><rect x="975" y="160" width="10" height="1" fill="#444"/><path d="M997.0,155 L1002.4000000000001,155 L999.7,158 Z" fill="#8a8a8a"/><path d="M1018.1,148.9 V157" stroke="#444" stroke-width="1.8"/><path d="M1014.6,156 H1021.6 L1018.1,160.2 Z" fill="#444"/><rect x="1010" y="162" width="16.1" height="1.3" fill="#444"/><path d="M1033.0,155 L1038.4,155 L1035.7,158 Z" fill="#8a8a8a"/><rect x="1044.7" y="147.9" width="1.3" height="14.1" fill="#444"/><path d="M1046,155 H1060.5" stroke="#444" stroke-width="1.7"/><path d="M1059.3,151.8 L1063.5,155 L1059.3,158.2 Z" fill="#444"/><path d="M1057.2,148 V153.3 M1057.2,156.7 V162" stroke="#444" stroke-width="1.1"/><path d="M1068.8999999999999,155 L1074.3,155 L1071.6,158 Z" fill="#8a8a8a"/><path d="M1100.5,152.9 H1096.2 C1094.5,152.9 1093.4,154 1093.4,155.25 C1093.4,156.5 1094.5,157.6 1096.2,157.6 H1100.5 M1102.9,152.9 H1107.2 C1108.9,152.9 1110,154 1110,155.25 C1110,156.5 1108.9,157.6 1107.2,157.6 H1102.9" fill="none" stroke="#444" stroke-width="2.2"/><rect x="1097" y="154.5" width="9.4" height="1.5" fill="#444"/><path d="M1119.2,147.9 H1137 V161.8 H1121.5 V150 Z" fill="#444"/><rect x="1124.5" y="151" width="10" height="1" fill="#f3f3f3"/><rect x="1124.5" y="153" width="10" height="1" fill="#f3f3f3"/><rect x="1124.5" y="155" width="10" height="1" fill="#f3f3f3"/><rect x="1124.5" y="157" width="6.5" height="1" fill="#f3f3f3"/><rect x="1146.3" y="148.6" width="16.5" height="13.5" fill="none" stroke="#444" stroke-width="1.1"/><rect x="1145.1" y="147.4" width="2.4" height="2.4" fill="#fff" stroke="#444" stroke-width="0.8"/><rect x="1161.6" y="147.4" width="2.4" height="2.4" fill="#fff" stroke="#444" stroke-width="0.8"/><rect x="1145.1" y="160.9" width="2.4" height="2.4" fill="#fff" stroke="#444" stroke-width="0.8"/><rect x="1161.6" y="160.9" width="2.4" height="2.4" fill="#fff" stroke="#444" stroke-width="0.8"/><rect x="1149.2" y="151" width="2.4" height="8.6" fill="#444"/><rect x="1153.2" y="154.8" width="2.4" height="4.8" fill="#444"/><rect x="1157.2" y="152.4" width="2.4" height="7.2" fill="#444"/><path d="M1172,149.9 H1186.2 L1180.4,156.2 V161.8 H1177.8 V156.2 Z" fill="#444"/><path d="M1175.5,151.6 H1182.7 L1179.1,155.4 Z" fill="#f3f3f3"/><path d="M1195.7,156 L1201.1000000000001,156 L1198.4,159 Z" fill="#8a8a8a"/><path d="M1222.3,151.7 V149 H1212.8 V150.5 L1216.8,155.1 L1212.8,159.6 V161.1 H1222.3 V158.4" fill="none" stroke="#444" stroke-width="1.9" stroke-linejoin="miter"/><path d="M1231.7,156 L1237.1000000000001,156 L1234.4,159 Z" fill="#8a8a8a"/><text x="1256.3" y="158.5" font-size="14.5" fill="#555" textLength="17">Py</text><path d="M1282.6,156 L1288.0,156 L1285.3,159 Z" fill="#8a8a8a"/></svg>
<svg class="a" style="left:0;top:0" width="1441" height="578"><defs><linearGradient id="gmain" x1="0" y1="0" x2="1" y2="1"><stop offset="0" stop-color="#25a668"/><stop offset="1" stop-color="#1a9a57"/></linearGradient><linearGradient id="gsh" x1="0" y1="0" x2="0" y2="1"><stop offset="0" stop-color="#128a4d"/><stop offset="1" stop-color="#1a9656"/></linearGradient></defs><path d="M190.2,139.4 L266.8,139.4 L309.9,181.3 L309.9,302 C309.9,306.5 306.4,310 302,310 L190.2,310 C185.8,310 182.2,306.5 182.2,302 L182.2,147.4 C182.2,143 185.8,139.4 190.2,139.4 Z" fill="url(#gmain)"/><path d="M273.5,181.3 L309.9,181.3 L309.9,219.8 Z" fill="url(#gsh)"/><path d="M266.8,139.4 L309.9,181.3 L274.3,181.3 C270.2,181.3 266.8,177.9 266.8,173.8 Z" fill="#8dcfac"/><rect x="210" y="217.8" width="71.3" height="60" fill="#f1f1f1"/><g fill="#1e9d5a"><rect x="216.9" y="224.5" width="25" height="10.4"/><rect x="249.3" y="224.5" width="24.7" height="10.4"/><rect x="216.9" y="242" width="25" height="10.8"/><rect x="249.3" y="242" width="24.7" height="10.8"/><rect x="216.9" y="260" width="25" height="11"/><rect x="249.3" y="260" width="24.7" height="11"/></g></svg></body></html>
